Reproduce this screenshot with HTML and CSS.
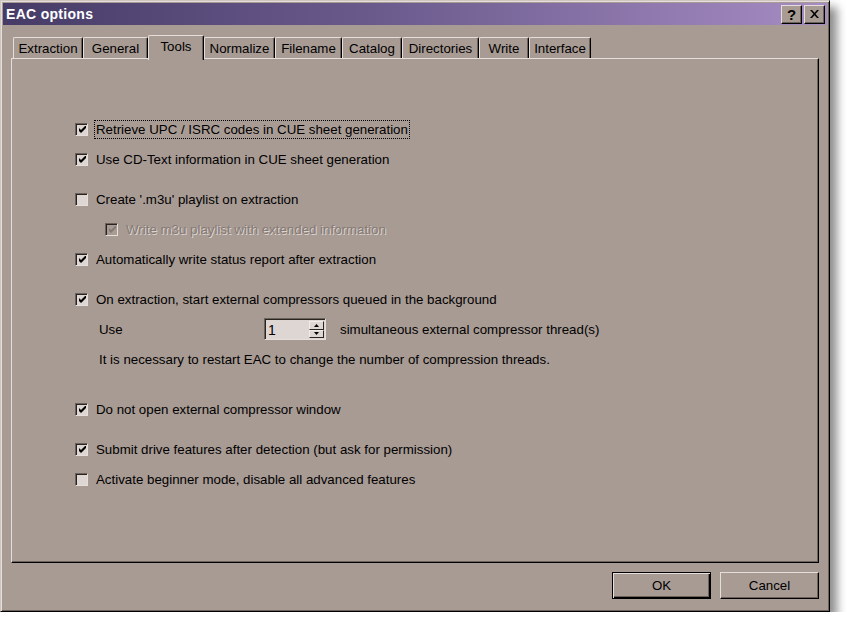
FILE: index.html
```html
<!DOCTYPE html>
<html>
<head>
<meta charset="utf-8">
<link rel="stylesheet" href="styles.css">
</head>
<body>
<div class="dialog">
  <div class="titlebar">
    <span class="title">EAC options</span>
    <div class="tbtns">
      <div class="tbtn">?</div>
      <div class="tbtn x">
        <svg width="9" height="8" viewBox="0 0 9 8"><path d="M0 0h2l2.5 2.7L7 0h2L5.5 4 9 8H7L4.5 5.3 2 8H0l3.5-4z" fill="#000"/></svg>
      </div>
    </div>
  </div>
  <div class="tabs">
    <div class="tab t-extraction">Extraction</div>
    <div class="tab t-general">General</div>
    <div class="tab sel t-tools">Tools</div>
    <div class="tab t-normalize">Normalize</div>
    <div class="tab t-filename">Filename</div>
    <div class="tab t-catalog">Catalog</div>
    <div class="tab t-directories">Directories</div>
    <div class="tab t-write">Write</div>
    <div class="tab t-interface">Interface</div>
  </div>
  <div class="panel">
    <div class="row"><span class="cb"><svg viewBox="0 0 7 7"><path d="M0 2l2 2 5-5v3L2 7 0 5z" fill="#000"/></svg></span><span class="lbl focus">Retrieve UPC / ISRC codes in CUE sheet generation</span></div>
    <div class="row"><span class="cb"><svg viewBox="0 0 7 7"><path d="M0 2l2 2 5-5v3L2 7 0 5z" fill="#000"/></svg></span><span class="lbl">Use CD-Text information in CUE sheet generation</span></div>
    <div class="row gap"><span class="cb"></span><span class="lbl">Create '.m3u' playlist on extraction</span></div>
    <div class="row indent disabled"><span class="cb"><svg viewBox="0 0 7 7"><path d="M0 2l2 2 5-5v3L2 7 0 5z" fill="#857a74"/></svg></span><span class="lbl">Write m3u playlist with extended information</span></div>
    <div class="row"><span class="cb"><svg viewBox="0 0 7 7"><path d="M0 2l2 2 5-5v3L2 7 0 5z" fill="#000"/></svg></span><span class="lbl">Automatically write status report after extraction</span></div>
    <div class="row gap"><span class="cb"><svg viewBox="0 0 7 7"><path d="M0 2l2 2 5-5v3L2 7 0 5z" fill="#000"/></svg></span><span class="lbl">On extraction, start external compressors queued in the background</span></div>
    <div class="row sub">
      <span class="use">Use</span>
      <div class="spin">
        <div class="spin-field">1</div>
        <div class="spin-btns">
          <div class="sbtn"><svg width="5" height="3" viewBox="0 0 5 3"><path d="M2.5 0L5 3H0z" fill="#000"/></svg></div>
          <div class="sbtn"><svg width="5" height="3" viewBox="0 0 5 3"><path d="M0 0h5L2.5 3z" fill="#000"/></svg></div>
        </div>
      </div>
      <span class="after">simultaneous external compressor thread(s)</span>
    </div>
    <div class="row sub"><span>It is necessary to restart EAC to change the number of compression threads.</span></div>
    <div class="row gap2"><span class="cb"><svg viewBox="0 0 7 7"><path d="M0 2l2 2 5-5v3L2 7 0 5z" fill="#000"/></svg></span><span class="lbl">Do not open external compressor window</span></div>
    <div class="row gap"><span class="cb"><svg viewBox="0 0 7 7"><path d="M0 2l2 2 5-5v3L2 7 0 5z" fill="#000"/></svg></span><span class="lbl">Submit drive features after detection (but ask for permission)</span></div>
    <div class="row"><span class="cb"></span><span class="lbl">Activate beginner mode, disable all advanced features</span></div>
  </div>
  <div class="footer">
    <div class="btn default">OK</div>
    <div class="btn">Cancel</div>
  </div>
</div>
</body>
</html>
```

FILE: styles.css
```css
html, body {
  margin: 0;
  padding: 0;
  background: #ffffff;
}
body {
  font-family: "Liberation Sans", Arial, sans-serif;
  font-size: 13.3px;
  color: #000;
}
.dialog {
  width: 830px;
  height: 612px;
  box-sizing: border-box;
  background: #a89b94;
  border: 1px solid;
  border-color: #cfc6c1 #000 #000 #cfc6c1;
  box-shadow: inset 1px 1px 0 #e6dedb, inset -1px -1px 0 #6c615b, 7px 7px 9px rgba(0,0,0,0.45);
  padding: 2px;
  display: flex;
  flex-direction: column;
}
.titlebar {
  height: 22px;
  background: linear-gradient(to right, #463b67 0%, #6a5a8c 45%, #a68cc2 100%);
  display: flex;
  align-items: center;
  justify-content: space-between;
  padding: 0 2px 0 3px;
}
.title {
  color: #fff;
  font-weight: bold;
  font-size: 14px;
  letter-spacing: 0.3px;
}
.tbtns {
  display: flex;
  gap: 2px;
}
.tbtn {
  width: 21px;
  height: 19px;
  box-sizing: border-box;
  background: #a89b94;
  border: 1px solid;
  border-color: #e6dedb #000 #000 #e6dedb;
  box-shadow: inset -1px -1px 0 #6c615b;
  display: flex;
  align-items: center;
  justify-content: center;
  font-weight: bold;
  font-size: 15px;
  line-height: 1;
}
.tabs {
  display: flex;
  align-items: flex-end;
  margin: 10px 8px 0 8px;
  padding-left: 2px;
  height: 23px;
  position: relative;
  z-index: 1;
}
.tab {
  height: 21px;
  box-sizing: border-box;
  display: flex;
  align-items: center;
  justify-content: center;
  border-left: 1px solid #e6dedb;
  border-top: 1px solid #e6dedb;
  border-right: 1px solid #000;
  box-shadow: inset -1px 0 0 #6c615b;
  border-radius: 2px 2px 0 0;
  background: #a89b94;
  white-space: nowrap;
  flex: none;
}
.t-extraction { width: 70px; }
.t-general { width: 65px; }
.t-tools { width: 56px; }
.t-normalize { width: 71px; }
.t-filename { width: 67px; }
.t-catalog { width: 60px; }
.t-directories { width: 77px; }
.t-write { width: 50px; }
.t-interface { width: 62px; }
.tab.sel {
  height: 25px;
  margin-bottom: -2px;
  padding-bottom: 3px;
  position: relative;
  z-index: 2;
}
.panel {
  margin: 0 8px;
  height: 505px;
  box-sizing: border-box;
  border: 1px solid;
  border-color: #e6dedb #000 #000 #e6dedb;
  box-shadow: inset -1px -1px 0 #6c615b;
  padding: 55px 0 0 63px;
  display: flex;
  flex-direction: column;
}
.row {
  height: 30px;
  display: flex;
  align-items: center;
  white-space: nowrap;
}
.row.gap { margin-top: 10px; }
.row.gap2 { margin-top: 20px; }
.row.indent { padding-left: 30px; }
.row.sub { padding-left: 24px; }
.cb {
  width: 13px;
  height: 13px;
  box-sizing: border-box;
  border: 1px solid;
  border-color: #6c615b #e6dedb #e6dedb #6c615b;
  box-shadow: inset 1px 1px 0 #2a2420;
  background: #ded6d2;
  display: flex;
  align-items: center;
  justify-content: center;
  margin-right: 6px;
  flex: none;
}
.cb svg {
  width: 7px;
  height: 7px;
  margin: 1px 0 0 1px;
}
.lbl {
  padding: 1px 1px;
  border: 1px solid transparent;
  line-height: 15px;
}
.lbl.focus {
  border: 1px dotted #000;
}
.disabled .cb {
  background: #a89b94;
}
.disabled .lbl {
  color: #857a74;
  text-shadow: 1px 1px 0 #ddd5d1;
}
.use {
  width: 165px;
}
.spin {
  width: 62px;
  height: 22px;
  box-sizing: border-box;
  border: 1px solid;
  border-color: #6c615b #e6dedb #e6dedb #6c615b;
  box-shadow: inset 1px 1px 0 #2a2420;
  background: #ded6d2;
  display: flex;
  padding: 2px 1px 1px 2px;
}
.spin-field {
  flex: 1;
  line-height: 18px;
  font-size: 14px;
  padding-left: 1px;
}
.spin-btns {
  width: 15px;
  display: flex;
  flex-direction: column;
}
.sbtn {
  flex: 1;
  box-sizing: border-box;
  background: #ded6d2;
  border: 1px solid;
  border-color: #f2ece9 #2a2420 #2a2420 #f2ece9;
  display: flex;
  align-items: center;
  justify-content: center;
}
.after {
  margin-left: 14px;
}
.footer {
  display: flex;
  justify-content: flex-end;
  gap: 9px;
  margin-top: 9px;
  padding-right: 8px;
}
.btn {
  width: 99px;
  height: 27px;
  box-sizing: border-box;
  border: 1px solid;
  border-color: #e6dedb #000 #000 #e6dedb;
  box-shadow: inset -1px -1px 0 #6c615b;
  display: flex;
  align-items: center;
  justify-content: center;
  background: #a89b94;
}
.btn.default {
  border: 1px solid #000;
  box-shadow: inset 1px 1px 0 #e6dedb, inset -1px -1px 0 #000, inset -2px -2px 0 #6c615b;
}
```
